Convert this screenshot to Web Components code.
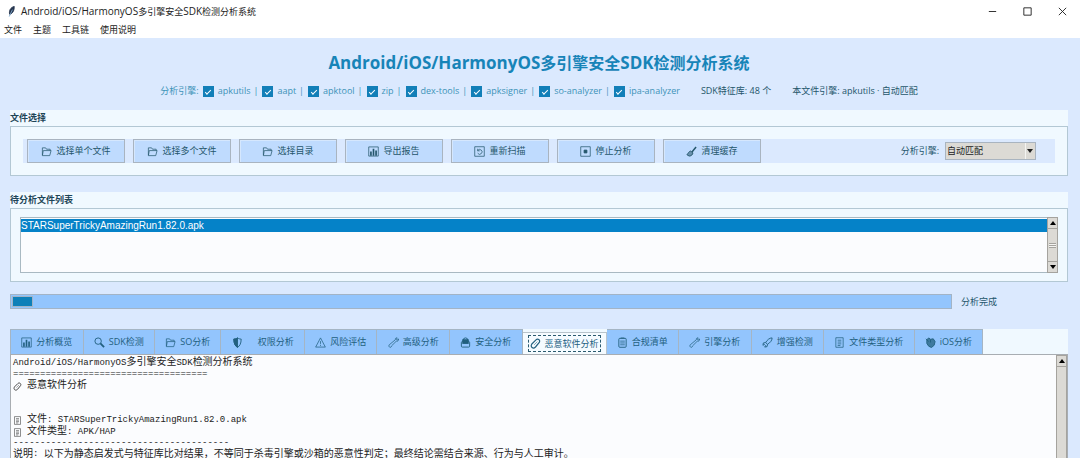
<!DOCTYPE html>
<html lang="zh-CN">
<head>
<meta charset="utf-8">
<title>Android/iOS/HarmonyOS多引擎安全SDK检测分析系统</title>
<style>
html, body { margin: 0; height: 100%; }
body { font: 9px/14px "Open Sans", "Noto Sans CJK SC", sans-serif; overflow: hidden; background: #dbe9fe;
  --ink: #24566b; --accent: #1784b8; --panel: #f0f9ff; --line: #b3c8d4; --btn: #bfdbfe; --tab: #93c5fd; --face: #dcdad5; }
</style>
</head>
<body>
<app-window></app-window>
<script>
const def = (name, html, setup) => customElements.define(name, class extends HTMLElement {
  constructor() {
    super();
    const t = document.createElement('template');
    t.innerHTML = html;
    this.attachShadow({ mode: 'open' }).append(t.content.cloneNode(true));
  }
  connectedCallback() { if (setup) setup(this, this.shadowRoot); }
});

const ICONS = {
  folder: '<path d="M1.500 10V2h3.500l1 1.500h4V5M1.500 10.500L2.500 5h8.500l-1.500 5.500z" stroke-width=".8"/>',
  chart: '<path d="M.8 1h10.4v10H.8z" stroke-width=".8"/><path d="M3.2 10.500V6M6 10.500V3M8.800 10.500V5" stroke-width="1.8"/>',
  rescan: '<path d="M.8.8h10.400v10.400H.8z" stroke-width=".8"/><path d="M4 3v2.300h2.300M4 5a2.600 2.600 0 1 1 0 2.800" stroke-width=".8"/>',
  stop: '<path d="M.8.8h10.400v10.400H.8z" stroke-width=".8"/><path d="M4.500 4.500h3v3h-3z" fill="currentColor"/>',
  brush: '<path d="M11 1L6.500 6.500" stroke-width="1.600"/><path d="M5 5.500C3 6 2.500 8 1 9.500L3.500 11C6 11 7.500 9 7.500 7.500z" fill="currentColor" fill-opacity=".55"/>',
  search: '<circle cx="4.500" cy="4.500" r="3.500"/><path d="M7 7l4 4" stroke-width="2"/>',
  shield: '<path d="M6 1c1.500 1 2.500 1.200 4 1.200C10 7 8.500 10 6 11.300 3.500 10 2 7 2 2.200 3.500 2.200 4.500 2 6 1z"/><path d="M6 1c-1.500 1-2.500 1.200-4 1.200C2 7 3.500 10 6 11.300z" fill="currentColor"/>',
  warn: '<path d="M6 1l5.300 10H.7zM6 4.500v3M6 8.500v1.200" stroke-width=".8"/>',
  wrench: '<path d="M2 8L8 3c-.3-1.500 1-2.500 2-2l-.8 1.600 1 .8L11.500 2c.3 2-1 3-2.500 2.600L3.800 9.800c.1 1-1 1.800-2 1.300S.6 8.400 2 8z" stroke-width=".8"/>',
  lock: '<path d="M3.500 5V3.500a2.500 2.500 0 0 1 5 0V5"/><rect x="3" y="3" width="6" height="4" fill="currentColor"/><rect x="1.500" y="5" width="9" height="6" rx="1"/>',
  pill: '<path d="M2 6.500L6.500 2c2-1.800 5 .2 3.600 2.800L6 9.800c-2.600 2.600-6 0-4-3.300z" stroke-width="1.300"/><path d="M4.500 7.500L8 4" stroke-width=".6"/>',
  list: '<rect x="2" y="1.500" width="8" height="9.700" rx="1"/><path d="M4 1h4M3.500 4.500h5M3.500 6.500h5M3.500 8.500h5" stroke-width=".8"/>',
  rocket: '<path d="M11 1C8 1 6 3 4 6l2 2c3-2 5-4 5-7zM4 6L1.500 6.500 1 9l2-1M6 8l-.5 2.500L3 11l1-2"/>',
  page: '<path d="M2 .8h8v10.400H2zM4 3.500h4M4 5.500h4M4 7.500h4M4 9.300h3" stroke-width=".8"/>',
  ios: '<path d="M2 3l2-2 2 1.500L9 2l2 3-1 4-3 2.500L4 10 2 7z" fill="currentColor" fill-opacity=".75"/><path d="M1 2l3 3M6 3v3"/>',
  feather: '<path d="M9 .5C5 1.500 3 5 4 9c4-1 5-5 5-8.500z" fill="#26364f" stroke="#26364f"/><path d="M7 4L3.500 11.500" stroke="#7fa6c9"/>',
  min: '<path d="M2 6h8"/>', max: '<path d="M2 2h8v8H2z"/>', close: '<path d="M2 2l8 8M10 2l-8 8"/>'
};

def('ui-icon', `<style>:host{display:inline-flex;flex:none;width:11px;height:11px}svg{width:100%;height:100%}</style>
<svg viewBox="0 0 12 12" fill="none" stroke="currentColor" aria-hidden="true"></svg>`,
  (el, r) => { r.querySelector('svg').innerHTML = ICONS[el.getAttribute('name')]; });

def('title-bar', `<style>
:host{display:flex;align-items:center;height:22px;padding:0 0 0 6px;background:#fff;color:#222}
ui-icon{margin-right:4px}
.sp{flex:1}
button{border:0;background:none;padding:0;width:35px;height:22px;display:flex;align-items:center;justify-content:center;color:#222}
button ui-icon{margin:0}
</style><ui-icon name="feather"></ui-icon><span><slot></slot></span><span class="sp"></span>
<button aria-label="最小化"><ui-icon name="min"></ui-icon></button><button aria-label="最大化"><ui-icon name="max"></ui-icon></button><button aria-label="关闭"><ui-icon name="close"></ui-icon></button>`);

def('menu-bar', `<style>
:host{display:flex;gap:11px;height:16px;padding:0 4px;background:#fff;align-items:center}
button{font:inherit;color:#222;border:0;background:none;padding:0}
</style><button>文件</button><button>主题</button><button>工具链</button><button>使用说明</button>`);

def('engine-check', `<style>
:host{display:inline-flex}
label{display:flex;align-items:center;gap:4px}
input{appearance:none;margin:0;width:11px;height:11px;background:#127fb8;display:grid;place-items:center}
input:checked::before{content:"";width:5px;height:2px;border:solid #fff;border-width:0 0 1px 1px;transform:rotate(-45deg)}
</style><label><input type="checkbox" checked><span><slot></slot></span></label>`);

def('app-header', `<style>
:host{display:block;text-align:center;padding:13px 0 12px}
h1{margin:0 0 9px;font-size:16px;line-height:24px;font-weight:700;color:#1784b8}
.latin{font-size:17px}
.row{display:flex;justify-content:center;align-items:center;color:#3d93b8;gap:4px}
.engines{display:flex;align-items:center;gap:3px 4px}
.engines>span{margin-left:-1px}
.info{color:var(--ink);margin-left:17px}
</style><h1><span class="latin">Android/iOS/HarmonyOS</span>多引擎安全<span class="latin">SDK</span>检测分析系统</h1>
<div class="row"><span>分析引擎:</span><div class="engines">
<engine-check>apkutils</engine-check><span>|</span><engine-check>aapt</engine-check><span>|</span><engine-check>apktool</engine-check><span>|</span><engine-check>zip</engine-check><span>|</span><engine-check>dex-tools</engine-check><span>|</span><engine-check>apksigner</engine-check><span>|</span><engine-check>so-analyzer</engine-check><span>|</span><engine-check>ipa-analyzer</engine-check></div>
<span class="info">SDK特征库: 48 个</span><span class="info">本文件引擎: apkutils · 自动匹配</span></div>`);

def('group-box', `<style>
:host{display:block;background:var(--panel);margin-bottom:16px}
h2{margin:0;font-size:9px;line-height:15px;height:16px;font-weight:700;color:#1d4557}
.box{border:1px solid var(--line);padding:var(--pad,12px)}
</style><h2></h2><div class="box"><slot></slot></div>`,
  (el, r) => { r.querySelector('h2').textContent = el.getAttribute('label'); });

def('tool-button', `<style>
:host{display:block;width:98px}
button{width:100%;height:24px;display:flex;align-items:center;justify-content:center;gap:4px;font:inherit;color:var(--ink);background:var(--btn);border:1px solid #a9b4c0;padding:0;box-shadow:inset 1px 1px #d5e7fd}
</style><button><ui-icon></ui-icon><span><slot></slot></span></button>`,
  (el, r) => { const i = document.createElement('ui-icon'); i.setAttribute('name', el.getAttribute('icon')); r.querySelector('ui-icon').replaceWith(i); });

def('tool-bar', `<style>
:host{display:flex;align-items:center;gap:8px;background:#dbe9fe;padding:0 19px 0 4px;color:var(--ink)}
.eng{margin-left:auto;display:flex;align-items:center;gap:6px}
.combo{position:relative;display:flex;width:91px}
select{appearance:none;width:100%;height:18px;font:inherit;color:#222;background:var(--face);border:1px solid #a9b4c0;border-radius:0;padding:0 12px 0 1px}
.combo::after{content:"";position:absolute;right:3px;top:7px;border:3px solid transparent;border-top:4px solid #222;border-bottom:0}
.combo::before{content:"";position:absolute;right:10px;top:1px;bottom:1px;border-left:1px solid #f4f4f2}
</style>
<tool-button icon="folder">选择单个文件</tool-button><tool-button icon="folder">选择多个文件</tool-button><tool-button icon="folder">选择目录</tool-button><tool-button icon="chart">导出报告</tool-button><tool-button icon="rescan">重新扫描</tool-button><tool-button icon="stop">停止分析</tool-button><tool-button icon="brush">清理缓存</tool-button>
<div class="eng"><label for="e">分析引擎:</label><div class="combo"><select id="e"><option>自动匹配</option></select></div></div>`);

def('scroll-bar', `<style>
:host{display:flex;flex-direction:column;width:11px;background:var(--face);box-sizing:border-box;border:1px solid #a5a39e}
i{flex:none;height:10px;display:grid;place-items:center}
i::before{content:"";border:3px solid transparent;border-bottom:4px solid #000;border-top:0}
.dn::before{border-top:4px solid #000;border-bottom:0}
.th{flex:1;border:solid #a5a39e;border-width:1px 0;display:grid;place-items:center}
.th::before{content:"";width:7px;height:5px;background:repeating-linear-gradient(#a5a39e 0 1px,#f4f4f2 1px 2px)}
:host([long]) .th::before,:host([long]) .dn{display:none}
:host([long]),:host([long]) .th{border-bottom:0}
</style><i></i><div class="th"></div><i class="dn"></i>`);

def('file-list', `<style>
:host{display:flex;height:54px;border:1px solid #a9b9c2;background:#fbfcfe;font:10px/13px "Liberation Sans",sans-serif}
ul{flex:1;margin:0;padding:1px 0;list-style:none}
li{background:#0582c8;color:#fff}
scroll-bar{margin:-1px}
</style><ul role="listbox" aria-label="待分析文件列表"><li role="option" aria-selected="true">STARSuperTrickyAmazingRun1.82.0.apk</li></ul><scroll-bar></scroll-bar>`);

def('progress-row', `<style>
:host{display:flex;align-items:center;gap:9px;margin:0 0 20px;color:var(--ink)}
progress{appearance:none;flex:1;height:15px;box-sizing:border-box;border:1px solid #a3b4c6;padding:2px;background:var(--tab)}
progress::-webkit-progress-bar{background:var(--tab)}
progress::-webkit-progress-value{background:#0e80b8;box-shadow:0 0 0 1px #a3b4c6}
label{width:107px}
</style><progress id="p" max="100" value="2"></progress><label for="p">分析完成</label>`);

def('tab-item', `<style>
:host{display:flex;flex:1 0 auto}
:host([active]){flex-grow:4}
button{flex:1;display:flex;align-items:center;justify-content:center;gap:4px;height:25px;font:inherit;color:#22607f;background:var(--tab);border:1px solid #a5b5c4;border-width:1px 1px 0 0;padding:0 10px;white-space:nowrap}
:host([wide]) button{gap:15px}
:host([active]) button{margin-top:3px;height:22px;background:#f5fbff;padding:0 5px;border-color:#b8c4cc}
:host([active]) .in{outline:1px dashed #2b5b70;height:15px;padding:0 1px}
.in{display:flex;align-items:center;gap:inherit}
</style><button role="tab"><span class="in"><ui-icon></ui-icon><span><slot></slot></span></span></button>`,
  (el, r) => { const i = document.createElement('ui-icon'); i.setAttribute('name', el.getAttribute('icon')); r.querySelector('ui-icon').replaceWith(i);
    r.querySelector('button').setAttribute('aria-selected', el.hasAttribute('active')); });

def('tab-strip', `<style>
:host{display:flex;height:25px;flex:none;background:var(--panel)}
.tabs{display:flex;flex:0 0 auto;width:92%;box-sizing:border-box;border-left:1px solid #a5b5c4}
</style><div class="tabs" role="tablist">
<tab-item icon="chart">分析概览</tab-item><tab-item icon="search">SDK检测</tab-item><tab-item icon="folder">SO分析</tab-item><tab-item icon="shield" wide>权限分析</tab-item><tab-item icon="warn">风险评估</tab-item><tab-item icon="wrench">高级分析</tab-item><tab-item icon="lock">安全分析</tab-item><tab-item icon="pill" active>恶意软件分析</tab-item><tab-item icon="list">合规清单</tab-item><tab-item icon="wrench">引擎分析</tab-item><tab-item icon="rocket">增强检测</tab-item><tab-item icon="page">文件类型分析</tab-item><tab-item icon="ios">iOS分析</tab-item></div>`);

def('report-view', `<style>
:host{display:flex;flex:1;min-height:0;border:1px solid #a8adb2;border-bottom:0;background:#fbfcfe;color:#222;overflow:hidden}
.t{flex:1;padding:2px 2px 0;font:10px/12px "Liberation Mono","Noto Sans CJK SC",monospace;white-space:pre;min-width:0}
p{margin:0;height:12px;display:flex;align-items:center}
.short{height:11px;line-height:11px}
span{font-size:9px}
ui-icon{width:9px;height:9px;margin-right:5px;color:#444}
</style><div class="t"><p><span>Android/iOS/HarmonyOS</span>多引擎安全<span>SDK</span>检测分析系统</p><p class="short"><span>====================================</span></p><p><ui-icon name="pill"></ui-icon>恶意软件分析</p><p class="short"></p><p class="short"></p><p><ui-icon name="page"></ui-icon>文件<span>: STARSuperTrickyAmazingRun1.82.0.apk</span></p><p><ui-icon name="page"></ui-icon>文件类型<span>: APK/HAP</span></p><p class="short"><span>----------------------------------------</span></p><p class="short">说明<span>: </span>以下为静态启发式与特征库比对结果，不等同于杀毒引擎或沙箱的恶意性判定；最终结论需结合来源、行为与人工审计。</p></div><scroll-bar long></scroll-bar>`);

def('app-window', `<style>
:host{display:flex;flex-direction:column;height:100vh}
main{flex:1;min-height:0;display:flex;flex-direction:column;padding:0 12px 0 10px}
.files{--pad:8px 9px;margin-bottom:12px}
.latin{font-size:10px}
</style><title-bar><span class="latin">Android/iOS/HarmonyOS</span>多引擎安全<span class="latin">SDK</span>检测分析系统</title-bar><menu-bar></menu-bar>
<main><app-header></app-header>
<group-box label="文件选择"><tool-bar></tool-bar></group-box>
<group-box class="files" label="待分析文件列表"><file-list></file-list></group-box>
<progress-row></progress-row><tab-strip></tab-strip><report-view></report-view></main>`);
</script>
</body>
</html>
